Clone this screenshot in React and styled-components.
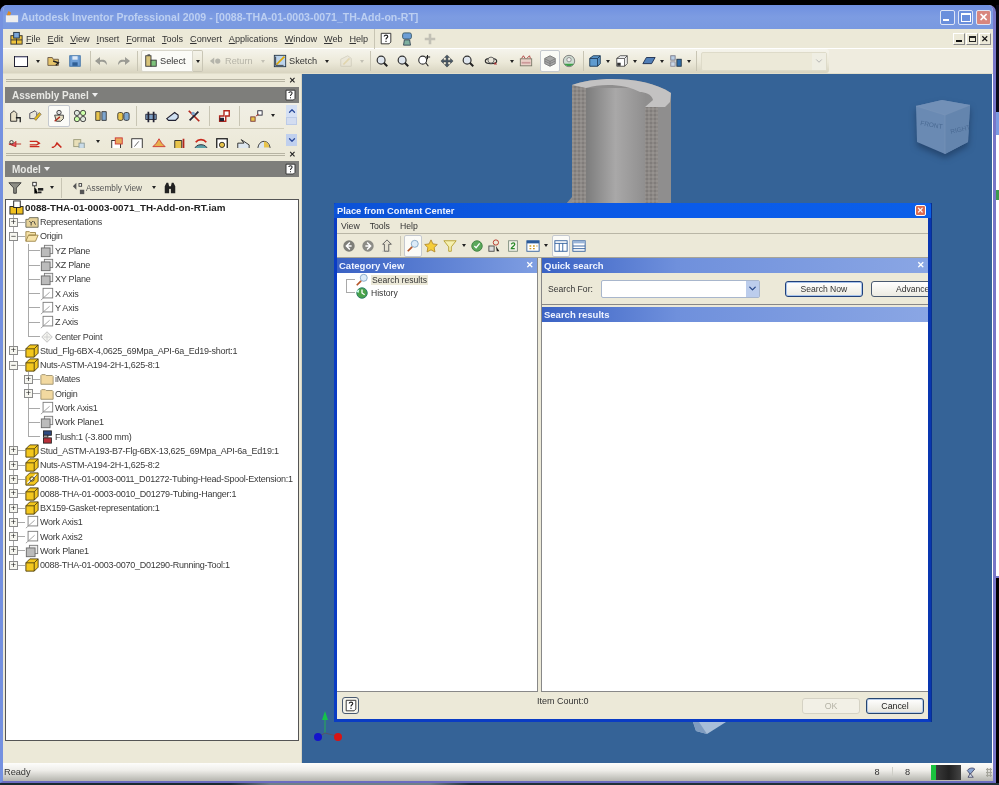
import React from 'react'
import styled, { createGlobalStyle } from 'styled-components'
import { ChevronDown, ChevronUp } from 'lucide-react'

const Global = createGlobalStyle`
html, body { margin: 0; padding: 0; background: #000; overflow: hidden; }
* { box-sizing: border-box; }
`

const drawings = {
  doc: <><rect x="1.5" y="3.5" width="13" height="10" fill="#fff" stroke="#223" /><path d="M2 4h12" stroke="#88a" /></>,
  open: <><path d="M1 4h5l1 2h6v7H1z" fill="#e6c46a" stroke="#654" /><path d="M7 8l6 2-3 3" fill="none" stroke="#222" strokeWidth="1.6" /></>,
  save: <><rect x="2" y="2" width="12" height="12" fill="#6d9ed6" stroke="#3b6ea5" /><rect x="5" y="2.5" width="6" height="4" fill="#dfe9f5" /><rect x="5" y="9.5" width="6" height="4" fill="#2f5f95" /></>,
  undo: <path d="M13 12c0-5-3-6-7-5V4L1 8l5 4V9c3-1 5 0 7 3z" fill="#9b9b94" />,
  redo: <path d="M3 12c0-5 3-6 7-5V4l5 4-5 4V9c-3-1-5 0-7 3z" fill="#9b9b94" />,
  select: <><rect x="2" y="2" width="6" height="12" fill="#d8c47a" stroke="#333" /><rect x="8" y="7" width="6" height="7" fill="#7ec27a" stroke="#333" /><path d="M4 1h3" stroke="#222" /></>,
  back: <><path d="M1 8l5-4v8z" fill="#a8a8a0" /><circle cx="10" cy="8" r="3" fill="#a8a8a0" /></>,
  sketch: <><rect x="1.5" y="1.5" width="13" height="13" fill="#bcd4ec" stroke="#234" /><path d="M4 12L13 3" stroke="#e0a800" strokeWidth="2" /><path d="M3 13h9M3 3v10" stroke="#333" /></>,
  sketch2: <><path d="M2 14V6l8-4 4 3v9z" fill="#e8e4d6" stroke="#bdb8a8" /><path d="M5 12l7-7" stroke="#d9c68c" strokeWidth="2" /></>,
  zoom: <><circle cx="7" cy="7" r="4.5" fill="#dfe6ee" stroke="#333" strokeWidth="1.4" /><path d="M10 10l4 4" stroke="#222" strokeWidth="2.2" /></>,
  zoomPlus: <><circle cx="6.500" cy="7" r="4.500" fill="#fff" stroke="#333" strokeWidth="1.300" /><path d="M10 10l3 4M12 1v5M10 3.500h5" stroke="#222" strokeWidth="1.200" /></>,
  pan: <path d="M8 1l3 3H9v3h3V5l3 3-3 3V9H9v3h2l-3 3-3-3h2V9H4v2L1 8l3-3v2h3V4H5z" fill="#4a5a68" stroke="#222" strokeWidth=".4" />,
  orbit: <><ellipse cx="8" cy="8" rx="6.500" ry="3" fill="none" stroke="#333" strokeWidth="1.400" /><circle cx="8" cy="7" r="3.500" fill="#e9e6da" stroke="#555" /><path d="M13 9l2 3h-4z" fill="#a33" /></>,
  camera: <><rect x="1.500" y="5.500" width="13" height="8" fill="#ead0c8" stroke="#776" /><path d="M3 5l2-3 2 3M9 5l3-3 1 3" stroke="#a33" fill="none" /><rect x="3" y="9" width="10" height="2" fill="#c99" /></>,
  shade: <><path d="M8 2l6 3v6l-6 3-6-3V5z" fill="#a7a7a7" stroke="#777" /><path d="M2 8l6 3 6-3M2 5.500l6 3 6-3M8 8v6" stroke="#7d7d7d" fill="none" /></>,
  globe: <><circle cx="8" cy="8" r="6.500" fill="#cfdcd2" stroke="#777" /><circle cx="8" cy="6.500" r="2.500" fill="#eee" stroke="#888" /><path d="M2.500 11c2 3.600 9 3.600 11 0z" fill="#3f9f4a" /></>,
  cube: <><path d="M2 5l4-3h8v9l-3 3H2z" fill="#5f9bd0" stroke="#17324f" /><path d="M2 5h9v9M11 5l3-3" fill="none" stroke="#17324f" /></>,
  wire: <><path d="M2 5l4-3h8v9l-3 3H2z" fill="#fff" stroke="#444" /><path d="M2 5h9v9M11 5l3-3" fill="none" stroke="#444" /><rect x="2.500" y="10" width="4" height="3.500" fill="#333" /></>,
  slab: <path d="M5 4h10l-4 7H1z" fill="#517fb8" stroke="#1a2a4a" />,
  tree: <><rect x="2" y="2" width="5" height="5" fill="#b8cde4" stroke="#778" /><rect x="9" y="6" width="5" height="8" fill="#2f6ca8" stroke="#234" /><rect x="2" y="9" width="5" height="5" fill="#c9d7e6" stroke="#889" /></>,
  help: <><path d="M2.500 1.500h11v10l-2 2h-9z" fill="#fff" stroke="#222" /><path d="M6 5c0-2 4-2 4 0 0 1.600-2 1.600-2 3.500M8 10v1.500" fill="none" stroke="#222" strokeWidth="1.300" /></>,
  agent: <><rect x="3" y="1" width="10" height="7" rx="2" fill="#6d9ed6" stroke="#356" /><path d="M5 9h6l1 6H4z" fill="#7fb0a0" stroke="#345" /></>,
  plusDim: <path d="M6.500 2h3v4.500H14v3H9.500V14h-3V9.500H2v-3h4.500z" fill="#c2c0b5" />,
  appIcon: <><rect x="2" y="5" width="12" height="9" fill="#f0c43a" stroke="#333" /><rect x="5" y="1.500" width="6" height="6" fill="#7aa6d8" stroke="#234" /><path d="M8 8v6M2 9.500h12" stroke="#333" /></>,
  winIcon: <><rect x="1" y="6" width="14" height="8" fill="#eee" /><path d="M4 1l3 2-1 3H2z" fill="#e08a1e" /></>,
  place: <><path d="M3 14V5l4-3 3 3v9z" fill="#e8e0c8" stroke="#222" /><path d="M9 10h5v5" stroke="#222" fill="none" strokeWidth="1.500" /></>,
  pencil: <><path d="M2 5l6-3 2 2v7H2z" fill="#e9e6da" stroke="#445" /><path d="M7 11l6-7 2 2-6 7z" fill="#e5bd17" stroke="#876" /></>,
  replace: <><circle cx="8" cy="4" r="2.500" fill="#ddd" stroke="#333" /><path d="M3 7h10v4l-3 3H5z" fill="#e6e0c4" stroke="#333" /><path d="M3 14l6-5" stroke="#b02a1c" strokeWidth="1.500" /></>,
  pattern: <><circle cx="4.500" cy="4.500" r="3" fill="#dfe6dd" stroke="#333" /><circle cx="11.500" cy="4.500" r="3" fill="#cfa" stroke="#333" /><circle cx="4.500" cy="11.500" r="3" fill="#cfa" stroke="#333" /><circle cx="11.500" cy="11.500" r="3" fill="#dfe6dd" stroke="#333" /></>,
  mirror: <><path d="M2 3h5v10H2z" fill="#e8c44c" stroke="#333" /><path d="M9 3h5v10H9z" fill="#7da6d0" stroke="#333" /></>,
  copy: <><rect x="2" y="4" width="6" height="9" rx="2" fill="#e8c44c" stroke="#333" /><rect x="9" y="4" width="6" height="9" rx="2" fill="#7da6d0" stroke="#333" /></>,
  bolt: <><path d="M2 6h12v6H2z" fill="#7d9fc4" stroke="#223" /><path d="M5 3v12M11 3v12" stroke="#223" strokeWidth="2" /></>,
  pipe: <path d="M2 11l9-7 4 3v3l-3 3H4z" fill="#cfe0f2" stroke="#223" strokeWidth="1.300" />,
  cross: <><path d="M2 2l12 12" stroke="#b3261c" strokeWidth="2" /><path d="M13 3L3 13" stroke="#223" strokeWidth="2" /><circle cx="7" cy="5" r="2" fill="#7da6d0" /></>,
  step: <><path d="M8 2h6v6h-4v6H3V8h5z" fill="#fff" stroke="#b3261c" strokeWidth="1.600" /><rect x="3" y="10" width="5" height="4" fill="#223" /></>,
  nodes: <><rect x="10" y="2" width="5" height="5" fill="#fff" stroke="#223" /><rect x="2" y="9" width="5" height="5" fill="#e8c44c" stroke="#733" /><path d="M8 8l3-2" stroke="#b3261c" /></>,
  redArrow: <><path d="M1 8h5l3-3v6zM9 8h6" stroke="#b3261c" fill="#e56" /><circle cx="4" cy="6" r="2" fill="none" stroke="#333" /></>,
  redArrow2: <><path d="M2 5h8l3 2-3 2H2M2 11h11" stroke="#c9281c" strokeWidth="1.600" fill="none" /></>,
  hook: <path d="M2 12c3 0 4-1 6-5l5 5" stroke="#c9281c" strokeWidth="1.800" fill="none" />,
  boxDots: <><rect x="2" y="3" width="8" height="8" fill="#e9dfb8" stroke="#997" /><rect x="8" y="7" width="6" height="6" fill="#c9dbe8" stroke="#899" /></>,
  block: <><rect x="2" y="4" width="10" height="10" fill="#fff" stroke="#222" /><rect x="6" y="1" width="8" height="7" fill="#e8a85c" stroke="#c33" /></>,
  square: <><rect x="2" y="2" width="12" height="12" fill="#fff" stroke="#222" /><path d="M5 11l5-6" stroke="#555" /></>,
  star2: <path d="M8 2l3 5 4 4H1l4-4z" fill="#e8b04c" stroke="#c33" />,
  prism: <><path d="M2 4h8v10H2z" fill="#e8c44c" stroke="#222" /><path d="M12 2v12" stroke="#b3261c" strokeWidth="2" /></>,
  dome: <><path d="M1 14c0-7 14-7 14 0z" fill="#5aa0a8" stroke="#223" /><path d="M2 6c3-4 9-4 12 0" stroke="#c9281c" strokeWidth="2" fill="none" /></>,
  cam: <><rect x="2" y="2" width="12" height="12" fill="#fff" stroke="#222" strokeWidth="1.500" /><circle cx="8" cy="9" r="3" fill="#e8c44c" stroke="#222" /></>,
  shoe: <path d="M2 14V7h7l-3-4 9 6v5z" fill="#dde6ee" stroke="#222" />,
  helmet: <><path d="M1 14c0-12 14-12 14 0z" fill="#dde6ee" stroke="#222" /><path d="M8 5c3 0 6 3 6 7H8z" fill="#e8c44c" /></>,
  filter: <path d="M1 2h14L9.500 8v6h-3V8z" fill="#8d8d85" stroke="#333" />,
  view: <><rect x="2" y="1.500" width="4" height="4" fill="#fff" stroke="#222" /><path d="M4 6v8h4M4 10h4" stroke="#222" strokeDasharray="1 1" /><rect x="8" y="8" width="6" height="3" fill="#222" /><rect x="8" y="12" width="4" height="2" fill="#222" /></>,
  assy: <><path d="M1 6l4-4v8z" fill="#555" /><rect x="8" y="3" width="3" height="3" fill="#fff" stroke="#333" /><rect x="9" y="10" width="5" height="5" fill="#555" /></>,
  binoc: <><path d="M2 14V6l2-4h2l1 4v8zM9 14V6l1-4h2l2 4v8z" fill="#222" /><rect x="6" y="6" width="4" height="3" fill="#222" /></>,
  root: <><rect x="1" y="7" width="14" height="8" fill="#f0c020" stroke="#222" /><rect x="5" y="1" width="7" height="7" fill="#fff" stroke="#222" /><path d="M8 8v7" stroke="#222" /></>,
  reps: <><path d="M1 5h3l1-2h10v11H1z" fill="#e5d198" stroke="#665" /><path d="M5 7l2 2 2-2M7 9v3M10 7l2 4" stroke="#333" fill="none" /></>,
  folderOpen: <path d="M1 14V3h4l1 1h6v3H4l-3 7h11l3-7H4" fill="#f7e3a8" stroke="#9b8446" />,
  folder: <path d="M1 14V4l1-1h4l1 1h7l1 1v9z" fill="#f2d9a0" stroke="#9b8f6c" />,
  plane: <><rect x="5" y="1.500" width="9.500" height="9.500" fill="#eee" stroke="#777" /><rect x="1.500" y="4.500" width="10" height="10" fill="#bbb" stroke="#666" /></>,
  axis: <><rect x="3.500" y="1.500" width="11" height="11" fill="#fff" stroke="#777" /><path d="M1 15L11 6" stroke="#999" /></>,
  point: <><path d="M8 2l6 6-6 6-6-6z" fill="#f4f4f0" stroke="#bbb" /><path d="M8 4v8M4 8h8" stroke="#ccc" /></>,
  flush: <><rect x="4" y="1" width="9" height="5" fill="#2f4a80" stroke="#222" /><rect x="4" y="6" width="5" height="2" fill="#fff" stroke="#222" /><rect x="4" y="9" width="9" height="6" fill="#b8303a" stroke="#222" /></>,
  part: <><path d="M1 5.500l4.500-4.500h9.500v9.500L10.500 15H1z" fill="#f3c71e" stroke="#4a3c10" /><path d="M1 5.500h9.500V15M10.500 5.500L15 1" fill="none" stroke="#4a3c10" /></>,
  partAdapt: <><path d="M1 5.500l4.500-4.500h9.500v9.500L10.500 15H1z" fill="#f3c71e" stroke="#4a3c10" /><path d="M3 13L13 3" stroke="#fff" strokeWidth="2" /><path d="M3 14L14 3" stroke="#444" /><circle cx="8" cy="8" r="2.500" fill="none" stroke="#333" /></>,
  search: <><circle cx="10" cy="5.500" r="4" fill="#dcebf8" stroke="#7fa3c4" /><path d="M7 9l-5 5" stroke="#b4552a" strokeWidth="2" /></>,
  history: <><circle cx="8" cy="8" r="6" fill="#4aa24a" stroke="#276" /><path d="M8 4v4l3 2" stroke="#fff" strokeWidth="1.500" fill="none" /><path d="M1 6l3 2 1-4" fill="#cfe" /></>,
  navBack: <><circle cx="8" cy="8" r="6.500" fill="#7e7e78" /><path d="M9 4L5 8l4 4M5 8h6" stroke="#fff" strokeWidth="1.700" fill="none" /></>,
  navFwd: <><circle cx="8" cy="8" r="6.500" fill="#8c8c86" /><path d="M7 4l4 4-4 4M11 8H5" stroke="#fff" strokeWidth="1.700" fill="none" /></>,
  up: <><path d="M8 1l5 5h-3v8H5V6H3z" fill="#e6e2d2" stroke="#555" /><path d="M3 14h10" stroke="#999" strokeDasharray="1 1" /></>,
  star: <path d="M8 1l2.200 4.600 5 .7-3.600 3.500.9 5L8 12.400 3.500 14.800l.9-5L.8 6.300l5-.7z" fill="#f5cd3a" stroke="#b2892a" />,
  funnel: <path d="M1 2h14L9.500 9v5h-3V9z" fill="#f5f0b0" stroke="#b39b2c" />,
  refreshGreen: <><circle cx="8" cy="8" r="6" fill="#5ba85b" stroke="#3f7f3f" /><path d="M5 8l2 2 4-5" stroke="#fff" strokeWidth="1.500" fill="none" /></>,
  cursorBox: <><circle cx="9" cy="4" r="3" fill="none" stroke="#b3261c" /><rect x="1" y="8" width="6" height="6" fill="#ddd" stroke="#444" /><path d="M9 8l4 6h-3z" fill="#222" /></>,
  num: <><rect x="3" y="2" width="10" height="12" fill="#f3f3ea" stroke="#7a8a7a" /><path d="M6 6c1-2 4-2 4 0s-4 3-4 5h4" stroke="#2a8a2a" strokeWidth="1.500" fill="none" /></>,
  grid: <><rect x="1" y="2" width="14" height="12" fill="#fff" stroke="#2a5a9a" /><rect x="1" y="2" width="14" height="3" fill="#2a5a9a" /><path d="M4 8h2M8 8h2M12 8h1M4 11h2M8 11h2" stroke="#d09a20" strokeWidth="1.500" /></>,
  split: <><rect x="1" y="2" width="14" height="12" fill="#fff" stroke="#2a5a9a" /><path d="M1 5h14M6 5v9M10 5v9" stroke="#2a5a9a" /></>,
  rows: <><rect x="1" y="2" width="14" height="12" fill="#fff" stroke="#2a5a9a" /><rect x="1" y="2" width="14" height="3" fill="#9ab5d8" /><path d="M1 8h14M1 11h14" stroke="#2a5a9a" /></>,
  signal: <><path d="M3 6c3-4 8-4 10-2l-6 7z" fill="#8aa5d0" stroke="#335" /><path d="M7 10l-3 5h7z" fill="#d5dde8" stroke="#335" /></>,
}

const Icon = ({ name, size = 14 }) => (
  <Glyph width={size} height={size} viewBox="0 0 16 16">{drawings[name]}</Glyph>
)

const mainTools = [
  { t: 'i', n: 'doc', w: 21, s: 16 }, { t: 'c', w: 14 }, { t: 'i', n: 'open', w: 17 }, { t: 'i', n: 'save', w: 26 },
  { t: 's', w: 4 }, { t: 'i', n: 'undo', w: 20, s: 16 }, { t: 'i', n: 'redo', w: 22, s: 16 }, { t: 's', w: 7 },
  { t: 'b', n: 'select', w: 52, label: 'Select', on: true }, { t: 'c', w: 10, boxed: true },
  { t: 'g', w: 4 }, { t: 'b', n: 'back', w: 52, label: 'Return', dim: true }, { t: 'c', w: 8, dim: true }, { t: 'g', w: 4 },
  { t: 'b', n: 'sketch', w: 46, label: 'Sketch' }, { t: 'g', w: 4 }, { t: 'c', w: 12 }, { t: 'g', w: 3 },
  { t: 'i', n: 'sketch2', w: 20, dim: true }, { t: 'c', w: 12, dim: true }, { t: 's', w: 4 },
  { t: 'i', n: 'zoom', w: 20 }, { t: 'i', n: 'zoom', w: 22 }, { t: 'i', n: 'zoomPlus', w: 20 }, { t: 'i', n: 'pan', w: 25 },
  { t: 'i', n: 'zoom', w: 18 }, { t: 'i', n: 'orbit', w: 28 }, { t: 'c', w: 14 }, { t: 'i', n: 'camera', w: 14 },
  { t: 'g', w: 7 }, { t: 'i', n: 'shade', w: 20, on: true }, { t: 'i', n: 'globe', w: 18 }, { t: 's', w: 10 },
  { t: 'i', n: 'cube', w: 14 }, { t: 'c', w: 12 }, { t: 'i', n: 'wire', w: 16 }, { t: 'c', w: 10 }, { t: 'i', n: 'slab', w: 18 },
  { t: 'c', w: 8 }, { t: 'i', n: 'tree', w: 20 }, { t: 'c', w: 6 }, { t: 's', w: 8 },
]

const panelRow1 = [
  { t: 'i', n: 'place', w: 19 }, { t: 'i', n: 'pencil', w: 21 }, { t: 'g', w: 3 }, { t: 'i', n: 'replace', w: 22, on: true },
  { t: 'i', n: 'pattern', w: 20 }, { t: 'i', n: 'mirror', w: 22 }, { t: 'i', n: 'copy', w: 21 }, { t: 's', w: 7 },
  { t: 'i', n: 'bolt', w: 21 }, { t: 'i', n: 'pipe', w: 21 }, { t: 'i', n: 'cross', w: 23 }, { t: 's', w: 8 },
  { t: 'i', n: 'step', w: 22 }, { t: 's', w: 9 }, { t: 'i', n: 'nodes', w: 24 }, { t: 'c', w: 10 },
]

const panelRow2 = [
  { t: 'i', n: 'redArrow', w: 19 }, { t: 'i', n: 'redArrow2', w: 22 }, { t: 'i', n: 'hook', w: 21 }, { t: 'i', n: 'boxDots', w: 24 },
  { t: 'c', w: 14 }, { t: 'g', w: 2 }, { t: 'i', n: 'block', w: 19 }, { t: 'i', n: 'square', w: 22 }, { t: 'i', n: 'star2', w: 21 },
  { t: 'i', n: 'prism', w: 21 }, { t: 'i', n: 'dome', w: 21 }, { t: 'i', n: 'cam', w: 21 }, { t: 'i', n: 'shoe', w: 21 }, { t: 'i', n: 'helmet', w: 21 },
]

const modelTools = [
  { t: 'i', n: 'filter', w: 19 }, { t: 'g', w: 3 }, { t: 'i', n: 'view', w: 21 }, { t: 'c', w: 8 }, { t: 's', w: 10 },
  { t: 'g', w: 4 }, { t: 'b', n: 'assy', w: 70, label: 'Assembly View', wide: true }, { t: 'g', w: 10 }, { t: 'c', w: 8 }, { t: 'g', w: 2 }, { t: 'i', n: 'binoc', w: 20 },
]

const dialogTools = [
  { t: 'i', n: 'navBack', w: 18 }, { t: 'i', n: 'navFwd', w: 19 }, { t: 'i', n: 'up', w: 19 }, { t: 's', w: 8 },
  { t: 'i', n: 'search', w: 18, on: true }, { t: 'i', n: 'star', w: 18 }, { t: 'i', n: 'funnel', w: 20 }, { t: 'c', w: 8 },
  { t: 'i', n: 'refreshGreen', w: 17 }, { t: 'i', n: 'cursorBox', w: 19 }, { t: 'i', n: 'num', w: 17 }, { t: 'g', w: 2 },
  { t: 'i', n: 'grid', w: 19 }, { t: 'c', w: 7 }, { t: 'g', w: 3 }, { t: 'i', n: 'split', w: 18, on: true }, { t: 'i', n: 'rows', w: 18 },
]

function Tools({ items, size }) {
  return items.map((it, i) => {
    if (it.t === 'g') return <Gap key={i} $w={it.w} />
    if (it.t === 's') return <Sep key={i} $w={it.w} />
    if (it.t === 'c') return <Caret key={i} $w={it.w} $dim={it.dim} $boxed={it.boxed} />
    if (it.t === 'b') {
      return (
        <LabelTool key={i} $w={it.w} $on={it.on} $dim={it.dim} $wide={it.wide}>
          <Icon name={it.n} size={14} />
          <span>{it.label}</span>
        </LabelTool>
      )
    }
    return <Tool key={i} $w={it.w} $on={it.on} $dim={it.dim}><Icon name={it.n} size={it.s || size || 14} /></Tool>
  })
}

const menus = ['File', 'Edit', 'View', 'Insert', 'Format', 'Tools', 'Convert', 'Applications', 'Window', 'Web', 'Help']

// level, icon, label, kind of expander, last in its branch
const treeRows = [
  [0, 'reps', 'Representations', '+'],
  [0, 'folderOpen', 'Origin', '-'],
  [1, 'plane', 'YZ Plane'],
  [1, 'plane', 'XZ Plane'],
  [1, 'plane', 'XY Plane'],
  [1, 'axis', 'X Axis'],
  [1, 'axis', 'Y Axis'],
  [1, 'axis', 'Z Axis'],
  [1, 'point', 'Center Point', '', true],
  [0, 'part', 'Stud_Flg-6BX-4,0625_69Mpa_API-6a_Ed19-short:1', '+'],
  [0, 'part', 'Nuts-ASTM-A194-2H-1,625-8:1', '-'],
  [1, 'folder', 'iMates', '+'],
  [1, 'folder', 'Origin', '+'],
  [1, 'axis', 'Work Axis1'],
  [1, 'plane', 'Work Plane1'],
  [1, 'flush', 'Flush:1 (-3.800 mm)', '', true],
  [0, 'part', 'Stud_ASTM-A193-B7-Flg-6BX-13,625_69Mpa_API-6a_Ed19:1', '+'],
  [0, 'part', 'Nuts-ASTM-A194-2H-1,625-8:2', '+'],
  [0, 'partAdapt', '0088-THA-01-0003-0011_D01272-Tubing-Head-Spool-Extension:1', '+'],
  [0, 'part', '0088-THA-01-0003-0010_D01279-Tubing-Hanger:1', '+'],
  [0, 'part', 'BX159-Gasket-representation:1', '+'],
  [0, 'axis', 'Work Axis1', '+'],
  [0, 'axis', 'Work Axis2', '+'],
  [0, 'plane', 'Work Plane1', '+'],
  [0, 'part', '0088-THA-01-0003-0070_D01290-Running-Tool:1', '+', true],
]

export default function App() {
  return (
    <Screen>
      <Global />
      <Desk>
        <AppWindow>
          <TitleBar>
            <Icon name="winIcon" size={14} />
            <TitleText>Autodesk Inventor Professional 2009 - [0088-THA-01-0003-0071_TH-Add-on-RT]</TitleText>
            <WinButton $kind="min"><MinMark /></WinButton>
            <WinButton $kind="max"><MaxMark /></WinButton>
            <WinButton $kind="close">✕</WinButton>
          </TitleBar>
          <MenuBar>
            <Icon name="appIcon" size={15} />
            <MenuItems>
              {menus.map(m => (
                <MenuItem key={m}><u>{m[0]}</u>{m.slice(1)}</MenuItem>
              ))}
            </MenuItems>
            <Sep $w={12} />
            <Tool $w={12}><Icon name="help" size={14} /></Tool>
            <Tool $w={30}><Icon name="agent" size={14} /></Tool>
            <Tool $w={16}><Icon name="plusDim" size={14} /></Tool>
            <MdiButtons>
              <MdiButton><MdiMin /></MdiButton>
              <MdiButton><MdiRestore /></MdiButton>
              <MdiButton $close>✕</MdiButton>
            </MdiButtons>
          </MenuBar>
          <MainToolbar>
            <ToolStrip>
              <Tools items={mainTools} />
              <ComboBox><ComboArrow><ChevronDown size={10} strokeWidth={2} /></ComboArrow></ComboBox>
            </ToolStrip>
          </MainToolbar>
          <Body>
            <SidePanel>
              <GripRow><GripLine /><GripClose>✕</GripClose></GripRow>
              <PanelHeader>
                <span>Assembly Panel</span><HeaderCaret />
                <HeaderHelp><Icon name="help" size={13} /></HeaderHelp>
              </PanelHeader>
              <PanelIcons>
                <PanelRows>
                  <IconRow><Tools items={panelRow1} /></IconRow>
                  <ClippedRow><Tools items={panelRow2} /></ClippedRow>
                </PanelRows>
                <ScrollRail>
                  <ScrollBtn><ChevronUp size={10} strokeWidth={3} /></ScrollBtn>
                  <ScrollThumb />
                  <ScrollBtn $down><ChevronDown size={10} strokeWidth={3} /></ScrollBtn>
                </ScrollRail>
              </PanelIcons>
              <GripRow><GripLine /><GripClose>✕</GripClose></GripRow>
              <PanelHeader>
                <span>Model</span><HeaderCaret />
                <HeaderHelp><Icon name="help" size={13} /></HeaderHelp>
              </PanelHeader>
              <ModelTools><Tools items={modelTools} /></ModelTools>
              <TreeBox>
                <RootRow>
                  <Icon name="root" size={15} />
                  <span>0088-THA-01-0003-0071_TH-Add-on-RT.iam</span>
                </RootRow>
                {treeRows.map(([level, icon, label, exp, last], i) => (
                  <TreeRow key={i}>
                    {level === 1 && <Trunk />}
                    <Branch $end={last}>
                      {exp ? <Expander>{exp === '+' ? '+' : '−'}</Expander> : null}
                    </Branch>
                    <Icon name={icon} size={14} />
                    <TreeLabel>{label}</TreeLabel>
                  </TreeRow>
                ))}
              </TreeBox>
              <PanelFoot />
            </SidePanel>
            <Viewport>
              <Cylinder viewBox="0 0 110 130" width="110" height="130">
                <defs>
                  <linearGradient id="bore" x1="0" x2="1" y1="0" y2="0">
                    <stop offset="0" stopColor="#7c7c7c" />
                    <stop offset=".5" stopColor="#a9a8a8" />
                    <stop offset="1" stopColor="#908f8f" />
                  </linearGradient>
                  <pattern id="grain" width="4" height="4" patternUnits="userSpaceOnUse">
                    <rect width="4" height="4" fill="#8d8986" />
                    <circle cx="1" cy="1" r=".8" fill="#6f6c6a" />
                    <circle cx="3" cy="3" r=".7" fill="#a5a2a0" />
                  </pattern>
                </defs>
                <path d="M6 11C30 2 80 2 105 19v111H6z" fill="#8f8e8e" />
                <path d="M20 14h59v116H20z" fill="url(#bore)" />
                <path d="M6 12h14v118H6zM79 33h13v97H79z" fill="url(#grain)" />
                <path d="M6 11C30 2 80 2 105 19l-1 9-5 5H79l8-7C86 20 78 18 74 18 60 10 36 9 20 14z" fill="#c3c2c2" />
                <path d="M0 130l6-7v7z" fill="#8f8e8e" />
              </Cylinder>
              <ViewCube viewBox="0 0 60 60" width="60" height="60">
                <path d="M27 1L55 6 53 43 30 55 2 43 1 7z" fill="#6a8ab3" />
                <path d="M1 7l29 9 25-10L27 1z" fill="#7290b7" />
                <path d="M30 16v39l23-12 2-37z" fill="#6485ae" />
                <path d="M1 7l29 9M30 16L55 6M30 16v39" stroke="#7a95b9" fill="none" strokeWidth=".6" />
                <text x="5" y="26" fontSize="6.500" fontFamily="Liberation Sans" fill="#4a6a93" transform="rotate(10 5 26)">FRONT</text>
                <text x="36" y="35" fontSize="6.500" fontFamily="Liberation Sans" fill="#4a6a93" transform="rotate(-14 36 35)">RIGHT</text>
              </ViewCube>
              <Fragment_ viewBox="0 0 36 14" width="36" height="14">
                <path d="M0 0h33L14 12 3 9z" fill="#a8bed8" />
                <path d="M0 0h6l8 12-11-3z" fill="#7f9cc0" />
              </Fragment_>
              <Triad viewBox="0 0 36 36" width="36" height="36">
                <path d="M12 22V3" stroke="#27b050" />
                <path d="M12 0l3 9H9z" fill="#14c24a" />
                <path d="M12 22L5 26M12 22l12 3" stroke="#556" />
                <circle cx="5" cy="26" r="4" fill="#1414cc" />
                <circle cx="25" cy="26" r="4" fill="#d81414" />
              </Triad>
              <Dialog>
                <DialogTitle>
                  <span>Place from Content Center</span>
                  <DialogClose>✕</DialogClose>
                </DialogTitle>
                <DialogMenu>
                  <DialogMenuItem>View</DialogMenuItem>
                  <DialogMenuItem>Tools</DialogMenuItem>
                  <DialogMenuItem>Help</DialogMenuItem>
                </DialogMenu>
                <DialogToolbar><Tools items={dialogTools} /></DialogToolbar>
                <Panes>
                  <CategoryPane>
                    <PaneHeader>
                      <span>Category View</span>
                      <PaneClose>✕</PaneClose>
                    </PaneHeader>
                    <CategoryList>
                      <CategoryRow $first>
                        <Icon name="search" size={14} />
                        <SelectedLabel>Search results</SelectedLabel>
                      </CategoryRow>
                      <CategoryRow>
                        <Icon name="history" size={14} />
                        <span>History</span>
                      </CategoryRow>
                    </CategoryList>
                  </CategoryPane>
                  <SearchPane>
                    <PaneHeader $light>
                      <span>Quick search</span>
                      <PaneClose>✕</PaneClose>
                    </PaneHeader>
                    <SearchForm>
                      <span>Search For:</span>
                      <SearchInput><InputArrow><ChevronDown size={11} strokeWidth={3} /></InputArrow></SearchInput>
                      <FormButton $default>Search Now</FormButton>
                      <FormButton>Advanced</FormButton>
                    </SearchForm>
                    <ResultsHeader>Search results</ResultsHeader>
                    <Results />
                  </SearchPane>
                </Panes>
                <DialogFooter>
                  <FooterHelp><Icon name="help" size={14} /></FooterHelp>
                  <ItemCount>Item Count:0</ItemCount>
                  <FooterButton $disabled>OK</FooterButton>
                  <FooterButton>Cancel</FooterButton>
                </DialogFooter>
              </Dialog>
            </Viewport>
          </Body>
          <StatusBar>
            <StatusText>Ready</StatusText>
            <StatusCell>8</StatusCell>
            <StatusCell $rule>8</StatusCell>
            <Meter />
            <Icon name="signal" size={12} />
            <SizeGrip />
          </StatusBar>
        </AppWindow>
        <BackWindow>
          <BackBlock $h={107} $c="#0a0a18" />
          <BackBlock $h={23} $c="#7a9ae0" />
          <BackBlock $h={55} $c="#fff" />
          <BackBlock $h={10} $c="#3d9a4d" />
          <BackBlock $h={376} $c="#fff" />
          <BackBlock $h={2} $c="#7876c8" />
          <BackBlock $h={205} $c="#000" />
        </BackWindow>
      </Desk>
      <DesktopStrip />
    </Screen>
  )
}

const Screen = styled.div`
  width: 999px;
  height: 785px;
  overflow: hidden;
  background: #000;
  padding-top: 5px;
  font-family: "Liberation Sans", Arial, sans-serif;
  font-size: 9px;
  color: #222;
  filter: blur(0.35px);
`
const Desk = styled.div`
  display: flex;
  height: 778px;
`
const AppWindow = styled.div`
  width: 996px;
  height: 778px;
  flex-shrink: 0;
  display: flex;
  flex-direction: column;
  background: #ece9d8;
  border: solid #7591e0;
  border-width: 0 3px 2px 3px;
  border-right-color: #7876c8;
  border-bottom-color: #6c6cc0;
  border-radius: 7px 7px 0 0;
  overflow: hidden;
`
const BackWindow = styled.div`
  width: 3px;
  flex-shrink: 0;
  display: flex;
  flex-direction: column;
`
const BackBlock = styled.div`
  height: ${p => p.$h}px;
  flex-shrink: 0;
  background: ${p => p.$c};
`
const DesktopStrip = styled.div`
  height: 2px;
  background: linear-gradient(90deg, #1a2a30 0 230px, #6f7f88 270px 430px, #203038 470px);
`
const Glyph = styled.svg`
  display: block;
  flex-shrink: 0;
`
const TitleBar = styled.div`
  height: 24px;
  flex-shrink: 0;
  display: flex;
  align-items: center;
  padding: 0 2px 0 2px;
  background: linear-gradient(180deg, #6f90e0 0%, #7d9ce2 50%, #7999e0 100%);
`
const TitleText = styled.div`
  flex: 1;
  margin-left: 2px;
  font-size: 10.550px;
  font-weight: 700;
  color: #bccff2;
  white-space: nowrap;
`
const WinButton = styled.div`
  width: 15px;
  height: 15px;
  margin-left: 3px;
  border: 1px solid #dfe6f7;
  border-radius: 2px;
  display: flex;
  align-items: center;
  justify-content: center;
  color: #fff;
  font-size: 11px;
  font-weight: 700;
  background: ${p => (p.$kind === 'close' ? '#d8867e' : '#6a8fdc')};
`
const MinMark = styled.div`
  width: 6px;
  height: 2px;
  margin-top: 6px;
  margin-right: 3px;
  background: #fff;
`
const MaxMark = styled.div`
  width: 10px;
  height: 9px;
  border: 1px solid #fff;
  border-top-width: 2px;
`
const MenuBar = styled.div`
  height: 20px;
  flex-shrink: 0;
  display: flex;
  align-items: center;
  padding-left: 6px;
  background: #ece9d8;
  border-bottom: 1px solid #fff;
`
const MenuItems = styled.div`
  display: flex;
  margin-left: 2px;
  font-size: 9.100px;
  gap: 6.900px;
`
const MenuItem = styled.span`
  color: #333;
  white-space: nowrap;
  u { text-underline-offset: 1px; }
`
const MdiButtons = styled.div`
  margin-left: auto;
  display: flex;
  gap: 1px;
  padding-right: 2px;
`
const MdiButton = styled.div`
  width: 12px;
  height: 12px;
  display: flex;
  align-items: center;
  justify-content: center;
  border: 1px solid;
  border-color: #fff #888 #888 #fff;
  font-size: 9px;
  font-weight: 700;
  line-height: 8px;
  color: #111;
`
const MdiMin = styled.div`
  width: 6px;
  height: 2px;
  margin-top: 5px;
  background: #111;
`
const MdiRestore = styled.div`
  width: 7px;
  height: 6px;
  border: 1px solid #222;
  border-top-width: 2px;
`
const MainToolbar = styled.div`
  height: 25px;
  flex-shrink: 0;
  display: flex;
  background: #efecdf;
  border-bottom: 1px solid #e2dfcc;
`
const ToolStrip = styled.div`
  width: 826px;
  display: flex;
  align-items: center;
  padding-left: 7px;
  border-radius: 0 3px 3px 0;
  background: linear-gradient(180deg, #f5f4ec 0%, #ece9d9 55%, #d8d4c0 100%);
`
const Gap = styled.div`
  width: ${p => p.$w}px;
  flex-shrink: 0;
`
const Sep = styled.div`
  width: ${p => p.$w}px;
  height: 20px;
  flex-shrink: 0;
  background: linear-gradient(#c8c5b4, #c8c5b4) center / 1px 100% no-repeat;
`
const Caret = styled.div`
  width: ${p => p.$w}px;
  height: ${p => (p.$boxed ? '22px' : '8px')};
  flex-shrink: 0;
  display: flex;
  align-items: center;
  justify-content: center;
  ${p => p.$boxed && `
    border: 1px solid #c9c6b5;
    border-left: 0;
    border-radius: 0 2px 2px 0;
  `}
  &::after {
    content: '';
    border: 2.500px solid transparent;
    border-top: 3px solid ${p => (p.$dim ? '#c2c0b4' : '#222')};
    border-bottom: 0;
  }
`
const Tool = styled.div`
  width: ${p => p.$w}px;
  height: ${p => (p.$on ? '22px' : 'auto')};
  flex-shrink: 0;
  display: flex;
  align-items: center;
  justify-content: center;
  opacity: ${p => (p.$dim ? 0.55 : 1)};
  ${p => p.$on && `
    background: #fbfbf7;
    border: 1px solid #c5c9cf;
    border-radius: 2px;
  `}
`
const LabelTool = styled.div`
  width: ${p => p.$w}px;
  height: ${p => (p.$on ? '22px' : 'auto')};
  flex-shrink: 0;
  display: flex;
  align-items: center;
  gap: 2px;
  padding-left: 2px;
  white-space: nowrap;
  font-size: ${p => (p.$wide ? '8.300px' : '9.200px')};
  color: ${p => (p.$dim ? '#b5b3a7' : '#333')};
  ${p => p.$on && `
    background: #fbfbf7;
    border: 1px solid #d8d6ca;
    border-radius: 2px 0 0 2px;
  `}
  ${p => p.$dim && 'svg { opacity: .8; }'}
  ${p => p.$wide && 'color: #555; svg { margin-right: -2px; }'}
`
const ComboBox = styled.div`
  width: 126px;
  height: 19px;
  margin-left: 1px;
  display: flex;
  justify-content: flex-end;
  background: #ece9d8;
  border: 1px solid #dedbc9;
  border-radius: 2px;
`
const ComboArrow = styled.div`
  width: 14px;
  display: flex;
  align-items: center;
  justify-content: center;
  color: #aaa;
  background: #efeee3;
`
const Body = styled.div`
  flex: 1;
  display: flex;
  min-height: 0;
`
const SidePanel = styled.div`
  width: 299px;
  flex-shrink: 0;
  display: flex;
  flex-direction: column;
  background: #ece9d8;
  border-right: 1px solid #d8d5c4;
  padding-left: 2px;
`
const GripRow = styled.div`
  height: 13px;
  flex-shrink: 0;
  display: flex;
  align-items: center;
  padding-right: 5px;
`
const GripLine = styled.div`
  flex: 1;
  height: 3px;
  margin: 0 4px 0 1px;
  border: solid #b7b4a3;
  border-width: 1px 0;
`
const GripClose = styled.div`
  font-size: 8px;
  font-weight: 700;
  color: #222;
`
const PanelHeader = styled.div`
  height: 16px;
  flex-shrink: 0;
  display: flex;
  align-items: center;
  padding-left: 7px;
  margin-right: 2px;
  background: #7e7e7b;
  color: #e8e8e4;
  font-size: 10px;
  font-weight: 700;
`
const HeaderCaret = styled.i`
  margin-left: 3px;
  border: 3.500px solid transparent;
  border-top: 4px solid #eee;
  border-bottom: 0;
`
const HeaderHelp = styled.div`
  margin-left: auto;
  padding-right: 2px;
`
const PanelIcons = styled.div`
  height: 45px;
  flex-shrink: 0;
  display: flex;
  overflow: hidden;
  background: linear-gradient(180deg, #f1efe5, #ece9d8);
`
const PanelRows = styled.div`
  width: 279px;
`
const IconRow = styled.div`
  height: 26px;
  display: flex;
  align-items: center;
  border-bottom: 1px solid #cfccb9;
`
const ClippedRow = styled.div`
  height: 19px;
  padding-top: 8px;
  display: flex;
  align-items: flex-start;
  overflow: hidden;
`
const ScrollRail = styled.div`
  width: 11px;
  margin: 2px 0 0 2px;
  display: flex;
  flex-direction: column;
`
const ScrollBtn = styled.div`
  height: 12px;
  flex-shrink: 0;
  margin-top: ${p => (p.$down ? '9px' : '0')};
  display: flex;
  align-items: center;
  justify-content: center;
  background: ${p => (p.$down ? '#c0d0ee' : '#d5e0f4')};
  color: #2a4a9a;
`
const ScrollThumb = styled.div`
  height: 8px;
  flex-shrink: 0;
  background: #d3ddf1;
  border: 1px solid #bccbe8;
`
const ModelTools = styled.div`
  height: 21px;
  flex-shrink: 0;
  display: flex;
  align-items: center;
`
const TreeBox = styled.div`
  height: 542px;
  flex-shrink: 0;
  margin: 1px 2px 0 0;
  background: #fff;
  border: 1px solid #555;
  overflow: hidden;
`
const RootRow = styled.div`
  height: 15px;
  display: flex;
  align-items: center;
  gap: 1px;
  padding-left: 3px;
  font-size: 9.800px;
  font-weight: 700;
  color: #222;
  white-space: nowrap;
`
const TreeRow = styled.div`
  height: 14.300px;
  display: flex;
  align-items: center;
`
const Trunk = styled.div`
  width: 15px;
  height: 100%;
  flex-shrink: 0;
  background: linear-gradient(#a9a9a9, #a9a9a9) 7px 0 / 1px 100% no-repeat;
`
const Branch = styled.div`
  width: 19px;
  height: 100%;
  flex-shrink: 0;
  display: flex;
  align-items: center;
  padding-left: 3px;
  background:
    linear-gradient(#a9a9a9, #a9a9a9) 7px 50% / 12px 1px no-repeat,
    linear-gradient(#a9a9a9, #a9a9a9) 7px 0 / 1px ${p => (p.$end ? '50%' : '100%')} no-repeat;
`
const Expander = styled.div`
  width: 9px;
  height: 9px;
  display: flex;
  align-items: center;
  justify-content: center;
  background: #f6f6f0;
  border: 1px solid #8a8a8a;
  font-size: 9px;
  line-height: 7px;
  color: #222;
`
const TreeLabel = styled.span`
  margin-left: 1px;
  font-size: 9px;
  letter-spacing: -0.240px;
  color: #3a3a3a;
  white-space: nowrap;
`
const PanelFoot = styled.div`
  flex: 1;
`
const Viewport = styled.div`
  position: relative;
  flex: 1;
  background: #356397;
  border-right: 1px solid #fff;
  overflow: hidden;
`
const Cylinder = styled.svg`
  position: absolute;
  left: 264px;
  top: 0;
`
const ViewCube = styled.svg`
  position: absolute;
  left: 613px;
  top: 25px;
  filter: drop-shadow(0 4px 3px rgba(20, 40, 70, .5));
`
const Fragment_ = styled.svg`
  position: absolute;
  left: 391px;
  top: 648px;
`
const Triad = styled.svg`
  position: absolute;
  left: 11px;
  top: 637px;
`
const Dialog = styled.div`
  position: absolute;
  left: 32px;
  top: 129px;
  width: 597px;
  height: 519px;
  display: flex;
  flex-direction: column;
  background: #ece9d8;
  border: 3px solid #0a3cc4;
  border-top: 0;
  border-right-color: #0936b0;
  box-shadow: 1px 0 0 #083092;
`
const DialogTitle = styled.div`
  height: 15px;
  flex-shrink: 0;
  margin: 0 -3px;
  padding: 0 3px;
  display: flex;
  align-items: center;
  justify-content: space-between;
  background: linear-gradient(90deg, #0c52d6, #0a5bea 60%, #0b5fe8);
  color: #eef3ff;
  font-size: 9.300px;
  font-weight: 700;
  border-radius: 2px 2px 0 0;
`
const DialogClose = styled.div`
  width: 11px;
  height: 11px;
  background: #dc6d52;
  border: 1px solid #fff;
  border-radius: 2px;
  color: #fff;
  font-size: 8px;
  line-height: 9px;
  text-align: center;
  margin-right: 2px;
`
const DialogMenu = styled.div`
  height: 16px;
  flex-shrink: 0;
  display: flex;
  align-items: center;
  gap: 10px;
  padding-left: 4px;
  border-bottom: 1px solid #b9b6a6;
  font-size: 8.700px;
  color: #333;
`
const DialogMenuItem = styled.span``
const DialogToolbar = styled.div`
  height: 24px;
  flex-shrink: 0;
  display: flex;
  align-items: center;
  padding-left: 3px;
  border-bottom: 1px solid #a6a498;
`
const Panes = styled.div`
  height: 434px;
  flex-shrink: 0;
  display: flex;
  gap: 3px;
`
const CategoryPane = styled.div`
  width: 201px;
  flex-shrink: 0;
  display: flex;
  flex-direction: column;
  background: #fff;
  border-bottom: 1px solid #888;
  border-right: 1px solid #888;
`
const PaneHeader = styled.div`
  height: 15px;
  flex-shrink: 0;
  display: flex;
  align-items: center;
  justify-content: space-between;
  padding: 0 2px;
  color: #f0f4ff;
  font-size: 9.500px;
  font-weight: 700;
  background: linear-gradient(90deg, #3a62c4, ${p => (p.$light ? '#6f90dc 35%, #8aa6e4' : '#7f9ee2')});
`
const PaneClose = styled.div`
  width: 11px;
  height: 11px;
  color: #fff;
  font-size: 9px;
  line-height: 11px;
  text-align: center;
`
const CategoryList = styled.div`
  padding-left: 9px;
  display: flex;
  flex-direction: column;
`
const CategoryRow = styled.div`
  height: 13px;
  display: flex;
  align-items: center;
  gap: 2px;
  padding-left: 9px;
  font-size: 8.600px;
  color: #333;
  background:
    linear-gradient(#a9a9a9, #a9a9a9) 0 50% / 9px 1px no-repeat,
    linear-gradient(#a9a9a9, #a9a9a9) 0 ${p => (p.$first ? '100%' : '0')} / 1px 50% no-repeat;
`
const SelectedLabel = styled.span`
  background: #ece9d8;
  padding: 0 1px;
`
const SearchPane = styled.div`
  flex: 1;
  min-width: 0;
  display: flex;
  flex-direction: column;
  border-left: 1px solid #888;
  overflow: hidden;
`
const SearchForm = styled.div`
  height: 32px;
  flex-shrink: 0;
  display: flex;
  align-items: center;
  padding-left: 6px;
  font-size: 8.600px;
  color: #333;
  white-space: nowrap;
  border-bottom: 1px solid #888;
`
const SearchInput = styled.div`
  width: 159px;
  height: 18px;
  margin: 0 25px 0 8px;
  flex-shrink: 0;
  display: flex;
  justify-content: flex-end;
  background: #fff;
  border: 1px solid #a8b6cc;
  border-radius: 2px;
`
const InputArrow = styled.div`
  width: 13px;
  display: flex;
  align-items: center;
  justify-content: center;
  background: #bccdec;
  color: #2a4a8a;
`
const FormButton = styled.div`
  width: ${p => (p.$default ? '78px' : '76px')};
  height: 16px;
  flex-shrink: 0;
  margin-right: 8px;
  display: flex;
  align-items: center;
  justify-content: ${p => (p.$default ? 'center' : 'flex-start')};
  padding-left: ${p => (p.$default ? '0' : '24px')};
  border: 1px solid ${p => (p.$default ? '#20407a' : '#4a5a70')};
  border-radius: 3px;
  background: linear-gradient(180deg, #fff, #ecebe2);
  box-shadow: ${p => (p.$default ? 'inset 0 0 0 1px #a8c4ec' : 'none')};
  font-size: 8.600px;
  overflow: hidden;
`
const ResultsHeader = styled.div`
  height: 15px;
  flex-shrink: 0;
  margin-top: 2px;
  padding-left: 2px;
  line-height: 15px;
  color: #f0f4ff;
  font-size: 9.500px;
  font-weight: 700;
  background: linear-gradient(90deg, #3a62c4, #6f90dc 35%, #8aa6e4);
`
const Results = styled.div`
  flex: 1;
  background: #fff;
  border-bottom: 1px solid #888;
`
const DialogFooter = styled.div`
  flex: 1;
  display: flex;
  align-items: center;
  padding: 0 4px 0 5px;
  gap: 6px;
`
const FooterHelp = styled.div`
  width: 17px;
  height: 17px;
  display: flex;
  align-items: center;
  justify-content: center;
  border: 1px solid #4a5a70;
  border-radius: 3px;
  background: #f5f4ec;
`
const ItemCount = styled.div`
  flex: 1;
  align-self: flex-start;
  padding: 4px 0 0 172px;
  font-size: 9px;
  color: #333;
`
const FooterButton = styled.div`
  width: 58px;
  height: 16px;
  display: flex;
  align-items: center;
  justify-content: center;
  border: 1px solid ${p => (p.$disabled ? '#d5d2c4' : '#26456f')};
  border-radius: 3px;
  background: ${p => (p.$disabled ? '#f2f0e6' : 'linear-gradient(180deg,#fff,#e6e5dc)')};
  box-shadow: ${p => (p.$disabled ? 'none' : 'inset 0 0 0 1px #b5cbe8')};
  color: ${p => (p.$disabled ? '#b5b3a7' : '#222')};
  font-size: 8.800px;
`
const StatusBar = styled.div`
  height: 18px;
  flex-shrink: 0;
  display: flex;
  align-items: center;
  padding: 0 1px;
  font-size: 9.200px;
  color: #333;
  background: linear-gradient(180deg, #fdfdfb 0%, #efeeea 40%, #b5b5ae 100%);
`
const StatusText = styled.div`
  flex: 1;
`
const StatusCell = styled.div`
  width: 30px;
  text-align: center;
  border-left: ${p => (p.$rule ? '1px solid #cfcfc8' : '0')};
`
const Meter = styled.div`
  width: 30px;
  height: 15px;
  margin: 0 4px 0 9px;
  background: linear-gradient(90deg, #19c23e 0 5px, #3a3a3a 5px, #222 60%, #444);
`
const SizeGrip = styled.div`
  width: 6px;
  height: 9px;
  margin-left: 9px;
  background: radial-gradient(#a5a59c 1px, transparent 1.500px) 0 0 / 3px 3px;
`
